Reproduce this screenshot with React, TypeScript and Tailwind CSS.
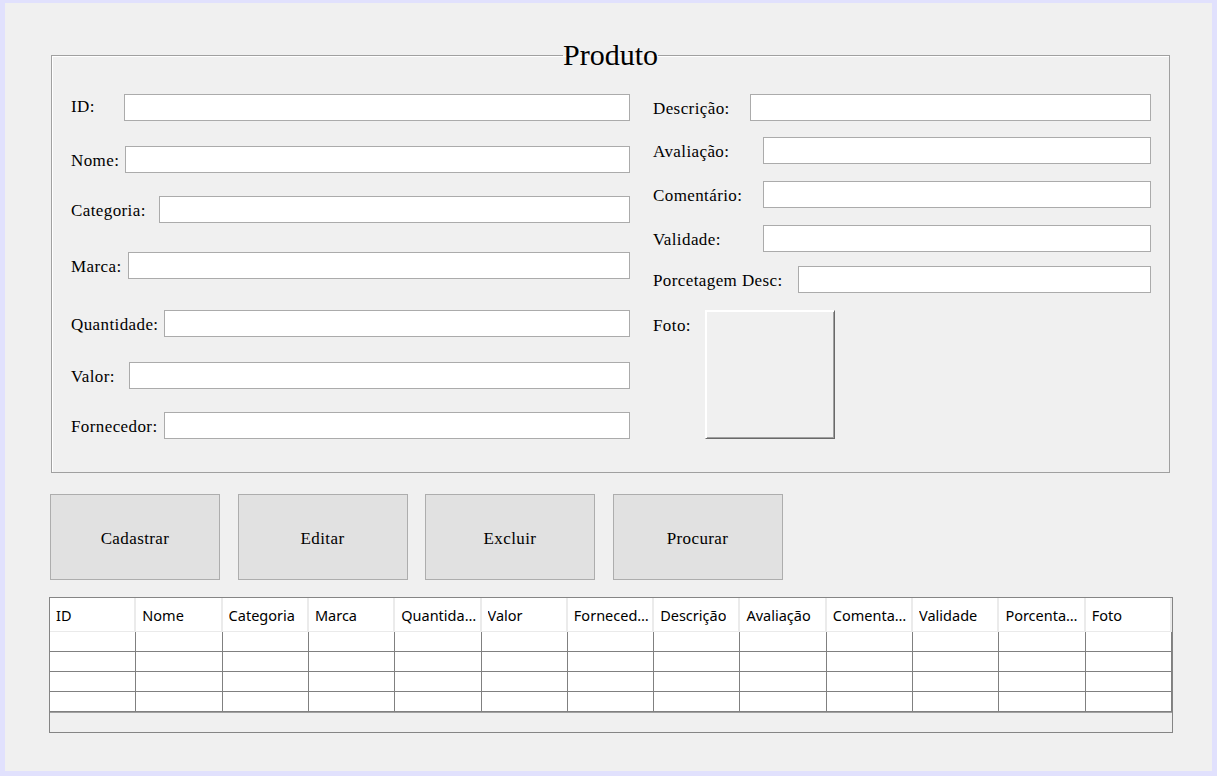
import React from 'react';

type Campo = {
  label: string;
  lw: string;
  mt: string;
  lc?: string;
};

const esquerda: Campo[] = [
  { label: 'ID:', lw: 'w-[53px]', mt: 'mt-0', lc: 'mb-[4px]' },
  { label: 'Nome:', lw: 'w-[54px]', mt: 'mt-[25px]' },
  { label: 'Categoria:', lw: 'w-[88px]', mt: 'mt-[23px]' },
  { label: 'Marca:', lw: 'w-[57px]', mt: 'mt-[29px]' },
  { label: 'Quantidade:', lw: 'w-[93px]', mt: 'mt-[31px]' },
  { label: 'Valor:', lw: 'w-[58px]', mt: 'mt-[25px]' },
  { label: 'Fornecedor:', lw: 'w-[93px]', mt: 'mt-[23px]' },
];

const direita: Campo[] = [
  { label: 'Descrição:', lw: 'w-[97px]', mt: 'mt-0' },
  { label: 'Avaliação:', lw: 'w-[110px]', mt: 'mt-[16px]' },
  { label: 'Comentário:', lw: 'w-[110px]', mt: 'mt-[17px]' },
  { label: 'Validade:', lw: 'w-[110px]', mt: 'mt-[17px]' },
  { label: 'Porcetagem Desc:', lw: 'w-[145px]', mt: 'mt-[14px]' },
];

const colunas = [
  'ID',
  'Nome',
  'Categoria',
  'Marca',
  'Quantidade',
  'Valor',
  'Fornecedor',
  'Descrição',
  'Avaliação',
  'Comentario',
  'Validade',
  'Porcentagem Desc',
  'Foto',
];

const botoes = ['Cadastrar', 'Editar', 'Excluir', 'Procurar'];

const Linha: React.FC<{ campo: Campo }> = ({ campo }) => (
  <div className={`flex items-center h-[27px] ${campo.mt}`}>
    <label className={`${campo.lw} shrink-0 whitespace-nowrap pt-[2px] ${campo.lc ?? ''}`}>
      {campo.label}
    </label>
    <input
      type="text"
      className="flex-1 h-[27px] bg-white border border-[#ababab] outline-none px-1"
    />
  </div>
);

export default function App() {
  return (
    <div className="w-[1217px] h-[776px] bg-[#e1e1fd] pt-[3px] px-[5px] pb-[5px]">
      <div
        className="w-full h-full bg-[#f0f0f0] pt-[37px] text-black text-[17px] tracking-[0.4px]"
        style={{ fontFamily: '"Liberation Serif", "Times New Roman", serif' }}
      >
        <fieldset className="ml-[46px] w-[1119px] h-[433px] border border-[#a0a0a0] shadow-[inset_1px_1px_0_#ffffff]">
          <legend className="mx-auto text-[30px] leading-none tracking-normal">Produto</legend>

          <div className="flex pl-[19px] mt-[24px]">
            <div className="w-[559px] flex flex-col">
              {esquerda.map((c) => (
                <Linha key={c.label} campo={c} />
              ))}
            </div>

            <div className="ml-[23px] w-[498px] flex flex-col">
              {direita.map((c) => (
                <Linha key={c.label} campo={c} />
              ))}
              <div className="flex items-start mt-[17px]">
                <label className="w-[52px] shrink-0 pt-[3px]">Foto:</label>
                <div className="w-[130px] h-[129px] bg-[#f0f0f0] border border-t-white border-l-white border-r-[#696969] border-b-[#696969] shadow-[inset_1px_1px_0_#ffffff,inset_-1px_-1px_0_#a0a0a0]" />
              </div>
            </div>
          </div>
        </fieldset>

        <div className="flex gap-[17.5px] ml-[45px] mt-[21px]">
          {botoes.map((b) => (
            <button
              key={b}
              className="w-[170px] h-[86px] pt-[4px] bg-[#e1e1e1] border border-[#adadad] text-[17px] hover:bg-[#e5f1fb] hover:border-[#0078d7]"
            >
              {b}
            </button>
          ))}
        </div>

        <div
          className="ml-[44px] mt-[17px] w-[1124px] h-[136px] border border-[#858585] flex flex-col tracking-normal"
          style={{ fontFamily: '"Noto Sans", "Open Sans", sans-serif' }}
        >
          <div className="grid grid-cols-13 h-[34px] bg-white border-b border-[#eaeaea]">
            {colunas.map((c) => (
              <div
                key={c}
                className="flex items-center pl-[6px] pr-[1px] pt-[3px] border-r-2 border-[#ebebeb] text-[14.5px] min-w-0 overflow-hidden"
              >
                <span className="truncate">{c}</span>
              </div>
            ))}
          </div>
          {[0, 1, 2, 3].map((r) => (
            <div key={r} className="grid grid-cols-13 h-[20px] bg-white">
              {colunas.map((c) => (
                <div key={c} className="border-r border-b border-[#808080]" />
              ))}
            </div>
          ))}
          <div className="flex-1 bg-[#f0f0f0] border-t border-[#a0a0a0]" />
        </div>
      </div>
    </div>
  );
}
